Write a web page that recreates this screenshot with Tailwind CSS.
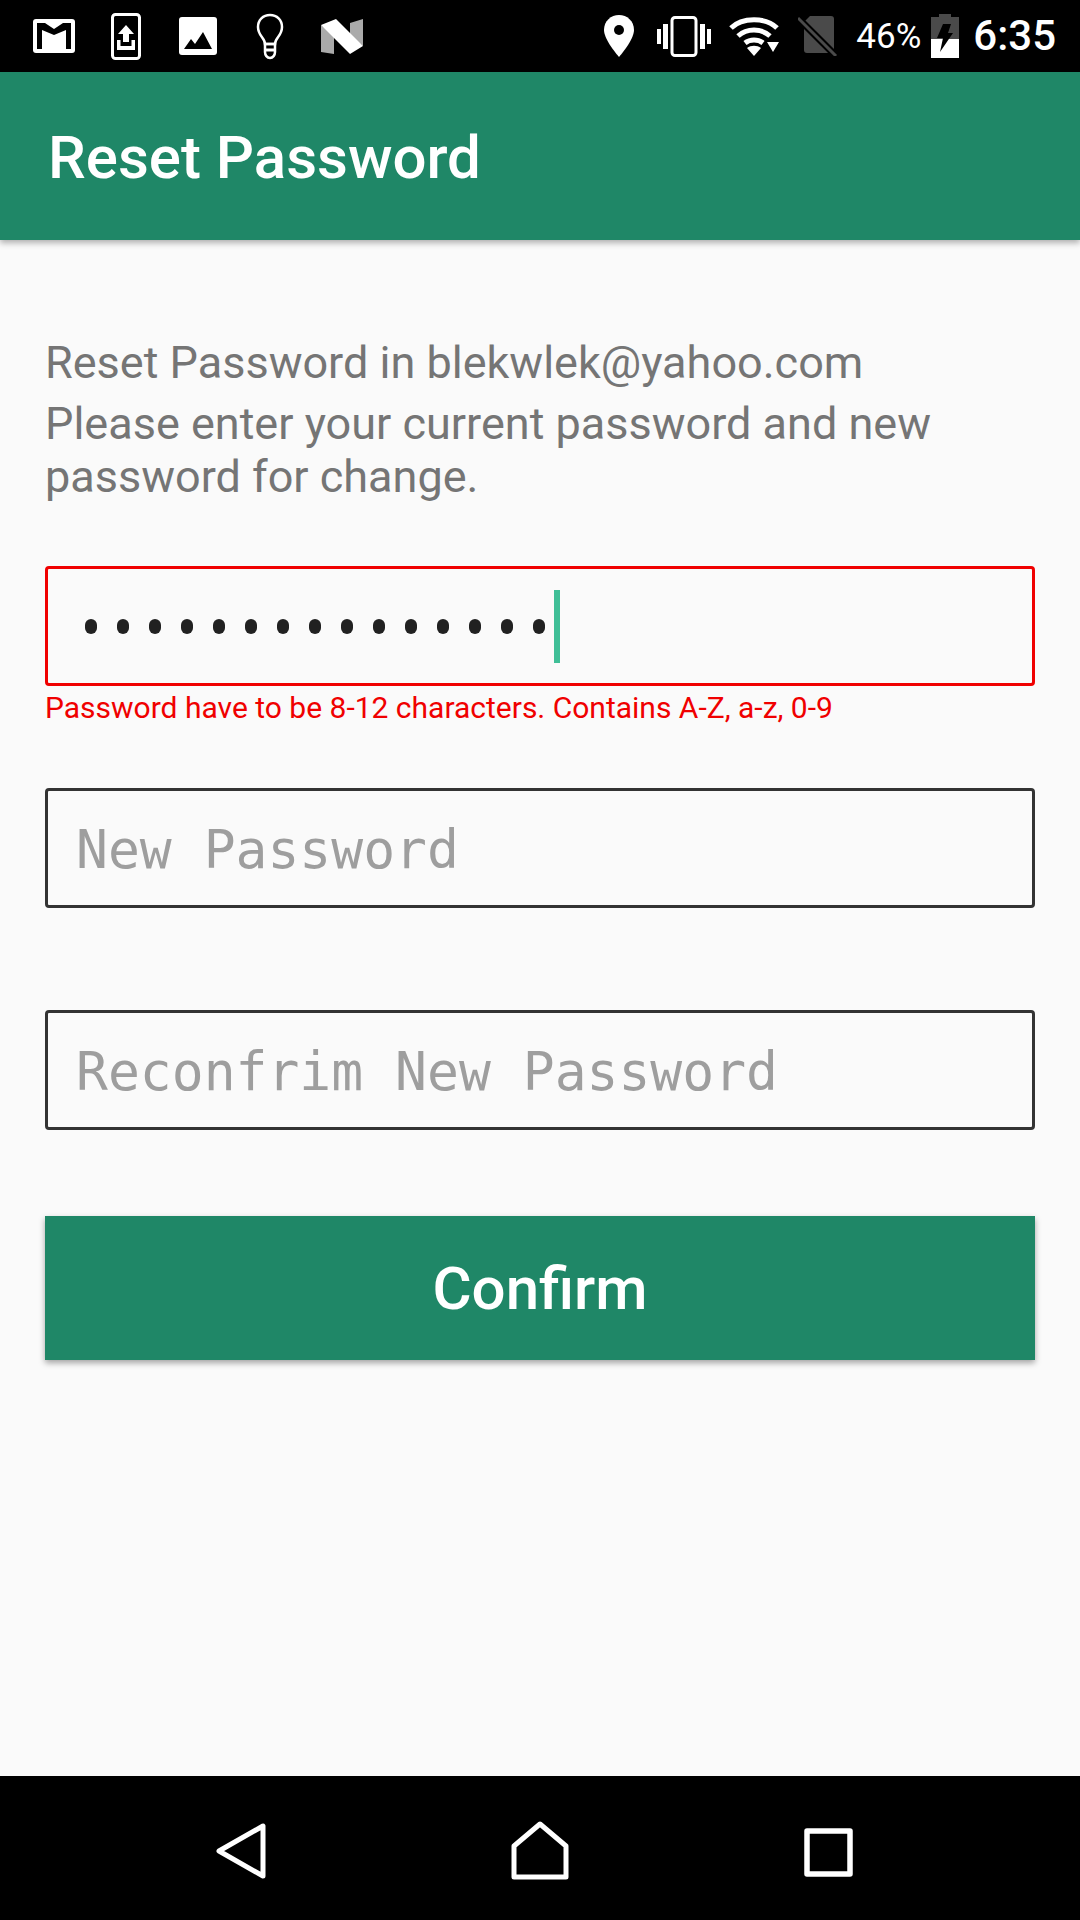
<!DOCTYPE html>
<html lang="en">
<head>
  <meta charset="UTF-8" />
  <title>Reset Password</title>
  <script src="https://cdn.jsdelivr.net/npm/@tailwindcss/browser@4"></script>
</head>
<body class="w-[1080px] h-[1920px] overflow-hidden flex flex-col bg-[#fafafa] font-['Roboto',sans-serif]">
  <!-- status bar -->
  <div class="h-[72px] shrink-0 bg-black flex items-center text-white relative">
    <div class="flex items-center pl-[33px]">
      <svg class="w-[42px] h-[34px]" viewBox="0 0 42 34"><rect x="0" y="0" width="42" height="34" rx="3" fill="#fff"/><path d="M4 4h8l9 6 9-6h8v26h-5V11l-12 5-12-5v19H4z" fill="#000"/></svg>
      <svg class="w-[30px] h-[47px] ml-[36px]" viewBox="0 0 30 47"><rect x="1.500" y="1.500" width="27" height="44" rx="3" fill="none" stroke="#fff" stroke-width="3"/><path d="M15 12l8 9h-5v8h-6v-8H7zM6 27h3.500v6h11v-6H24v10H6z" fill="#fff"/></svg>
      <svg class="w-[38px] h-[38px] ml-[38px]" viewBox="0 0 38 38"><rect width="38" height="38" rx="3" fill="#fff"/><path d="M5 32l7-10 4 5 8-12 9 17z" fill="#000"/></svg>
      <svg class="w-[28px] h-[47px] ml-[39px]" viewBox="0 0 28 47" fill="none" stroke="#fff" stroke-width="2.500"><path d="M9 31c0-6-7-8-7-17C2 7 7 2 14 2s12 5 12 12c0 9-7 11-7 17z"/><path d="M9 31h10v8c0 3-2 6-5 6s-5-3-5-6z"/><path d="M9 37h10" stroke-width="3"/></svg>
      <svg class="w-[42px] h-[35px] ml-[37px]" viewBox="0 0 42 35"><path d="M0 6l13 10v19L0 33z" fill="#aaa"/><path d="M42 0v27l-13-10V4z" fill="#aaa"/><path d="M0 6L15 0l27 27-13 8z" fill="#fff"/></svg>
    </div>
    <div class="flex items-center ml-auto pr-[24px]">
      <svg class="w-[30px] h-[42px]" viewBox="0 0 30 42"><path d="M15 0C7 0 0 6 0 15c0 10 15 27 15 27s15-17 15-27C30 6 23 0 15 0z" fill="#fff"/><circle cx="15" cy="15" r="5" fill="#000"/></svg>
      <svg class="w-[54px] h-[41px] ml-[23px]" viewBox="0 0 54 41"><rect x="0" y="13" width="4" height="15" fill="#fff"/><rect x="6" y="8" width="5" height="25" fill="#fff"/><rect x="15" y="1.500" width="24" height="38" rx="3" fill="none" stroke="#fff" stroke-width="3"/><rect x="43" y="8" width="5" height="25" fill="#fff"/><rect x="50" y="13" width="4" height="15" fill="#fff"/></svg>
      <svg class="w-[50px] h-[40px] ml-[18px]" viewBox="0 0 50 40"><path d="M2 12C13 1 37 1 48 12" fill="none" stroke="#fff" stroke-width="5"/><path d="M9 20c9-8 23-8 32 0" fill="none" stroke="#fff" stroke-width="5"/><path d="M16 27c5-4 13-4 18 0" fill="none" stroke="#fff" stroke-width="5"/><path d="M18 32c4-3 10-3 14 0l-7 8z" fill="#fff"/><path d="M38 26h12l-6 10z" fill="#fff"/></svg>
      <svg class="w-[40px] h-[40px] ml-[19px]" viewBox="0 0 40 40"><path d="M12 0h21a3 3 0 0 1 3 3v34H9a3 3 0 0 1-3-3V6z" fill="#4a4a4a"/><path d="M0 2l38 38" stroke="#000" stroke-width="7"/><path d="M0 2l38 38" stroke="#4a4a4a" stroke-width="3"/></svg>
      <span class="ml-[18px] text-[35px] leading-none">46%</span>
      <svg class="w-[28px] h-[44px] ml-[10px]" viewBox="0 0 28 44"><path d="M8 0h12v3h8v41H0V3h8z" fill="#4a4a4a"/><path d="M0 25h28v19H0z" fill="#fff"/><path d="M12 10h8l-3 9h5L9 38l3-14H6z" fill="#000"/></svg>
      <span class="ml-[14px] text-[42px] leading-none font-medium">6:35</span>
    </div>
  </div>

  <!-- app bar -->
  <header class="h-[168px] shrink-0 bg-[#1f8767] flex items-center pl-[48px] pt-[3px] shadow-[0_3px_6px_rgba(0,0,0,0.3)] relative">
    <h1 class="text-[60px] leading-none font-medium text-white">Reset Password</h1>
  </header>

  <main class="flex-1 px-[45px] pt-[96px]">
    <p class="text-[45px] leading-[53px] text-[#757575]">Reset Password in blekwlek@yahoo.com</p>
    <p class="text-[45px] leading-[53px] text-[#757575] mt-[8px]">Please enter your current password and new password for change.</p>

    <div class="mt-[63px] h-[120px] border-[3px] border-[#f00000] rounded-[4px] flex items-center pl-[37px]">
      <span class="flex gap-[20px]">
        <i class="block w-[12px] h-[15px] rounded-full bg-[#212121]"></i><i class="block w-[12px] h-[15px] rounded-full bg-[#212121]"></i><i class="block w-[12px] h-[15px] rounded-full bg-[#212121]"></i><i class="block w-[12px] h-[15px] rounded-full bg-[#212121]"></i><i class="block w-[12px] h-[15px] rounded-full bg-[#212121]"></i><i class="block w-[12px] h-[15px] rounded-full bg-[#212121]"></i><i class="block w-[12px] h-[15px] rounded-full bg-[#212121]"></i><i class="block w-[12px] h-[15px] rounded-full bg-[#212121]"></i><i class="block w-[12px] h-[15px] rounded-full bg-[#212121]"></i><i class="block w-[12px] h-[15px] rounded-full bg-[#212121]"></i><i class="block w-[12px] h-[15px] rounded-full bg-[#212121]"></i><i class="block w-[12px] h-[15px] rounded-full bg-[#212121]"></i><i class="block w-[12px] h-[15px] rounded-full bg-[#212121]"></i><i class="block w-[12px] h-[15px] rounded-full bg-[#212121]"></i><i class="block w-[12px] h-[15px] rounded-full bg-[#212121]"></i>
      </span>
      <span class="block w-[6px] h-[73px] ml-[9px] bg-[#40bf97]"></span>
    </div>
    <p class="text-[30px] leading-[36px] text-[#f00000] mt-[4px]">Password have to be 8-12 characters. Contains A-Z, a-z, 0-9</p>

    <div class="mt-[62px] h-[120px] border-[3px] border-[#333333] rounded-[4px] flex items-center pl-[28px] pt-[2px]">
      <span class="text-[53px] leading-none text-[#9e9e9e] font-['DejaVu_Sans_Mono',monospace]">New Password</span>
    </div>

    <div class="mt-[102px] h-[120px] border-[3px] border-[#333333] rounded-[4px] flex items-center pl-[28px] pt-[2px]">
      <span class="text-[53px] leading-none text-[#9e9e9e] font-['DejaVu_Sans_Mono',monospace]">Reconfrim New Password</span>
    </div>

    <button class="mt-[86px] w-full h-[144px] pt-[2px] bg-[#1f8767] text-white text-[60px] font-medium shadow-[0_3px_6px_rgba(0,0,0,0.35)]">Confirm</button>
  </main>

  <!-- nav bar -->
  <nav class="h-[144px] shrink-0 bg-black flex items-center pt-[9px]">
    <svg class="w-[52px] h-[56px] ml-[215px] mb-[3px]" viewBox="0 0 52 56" fill="none" stroke="#fff" stroke-width="5" stroke-linejoin="round"><path d="M4 28L48 3v50z"/></svg>
    <svg class="w-[58px] h-[59px] ml-[244px] mb-[5px]" viewBox="0 0 58 59" fill="none" stroke="#fff" stroke-width="5" stroke-linejoin="round"><path d="M3 25L29 3l26 22v31H3z"/></svg>
    <svg class="w-[49px] h-[49px] ml-[235px]" viewBox="0 0 49 49" fill="none" stroke="#fff" stroke-width="5.500" stroke-linejoin="round"><rect x="3" y="3" width="43" height="43"/></svg>
  </nav>
</body>
</html>
